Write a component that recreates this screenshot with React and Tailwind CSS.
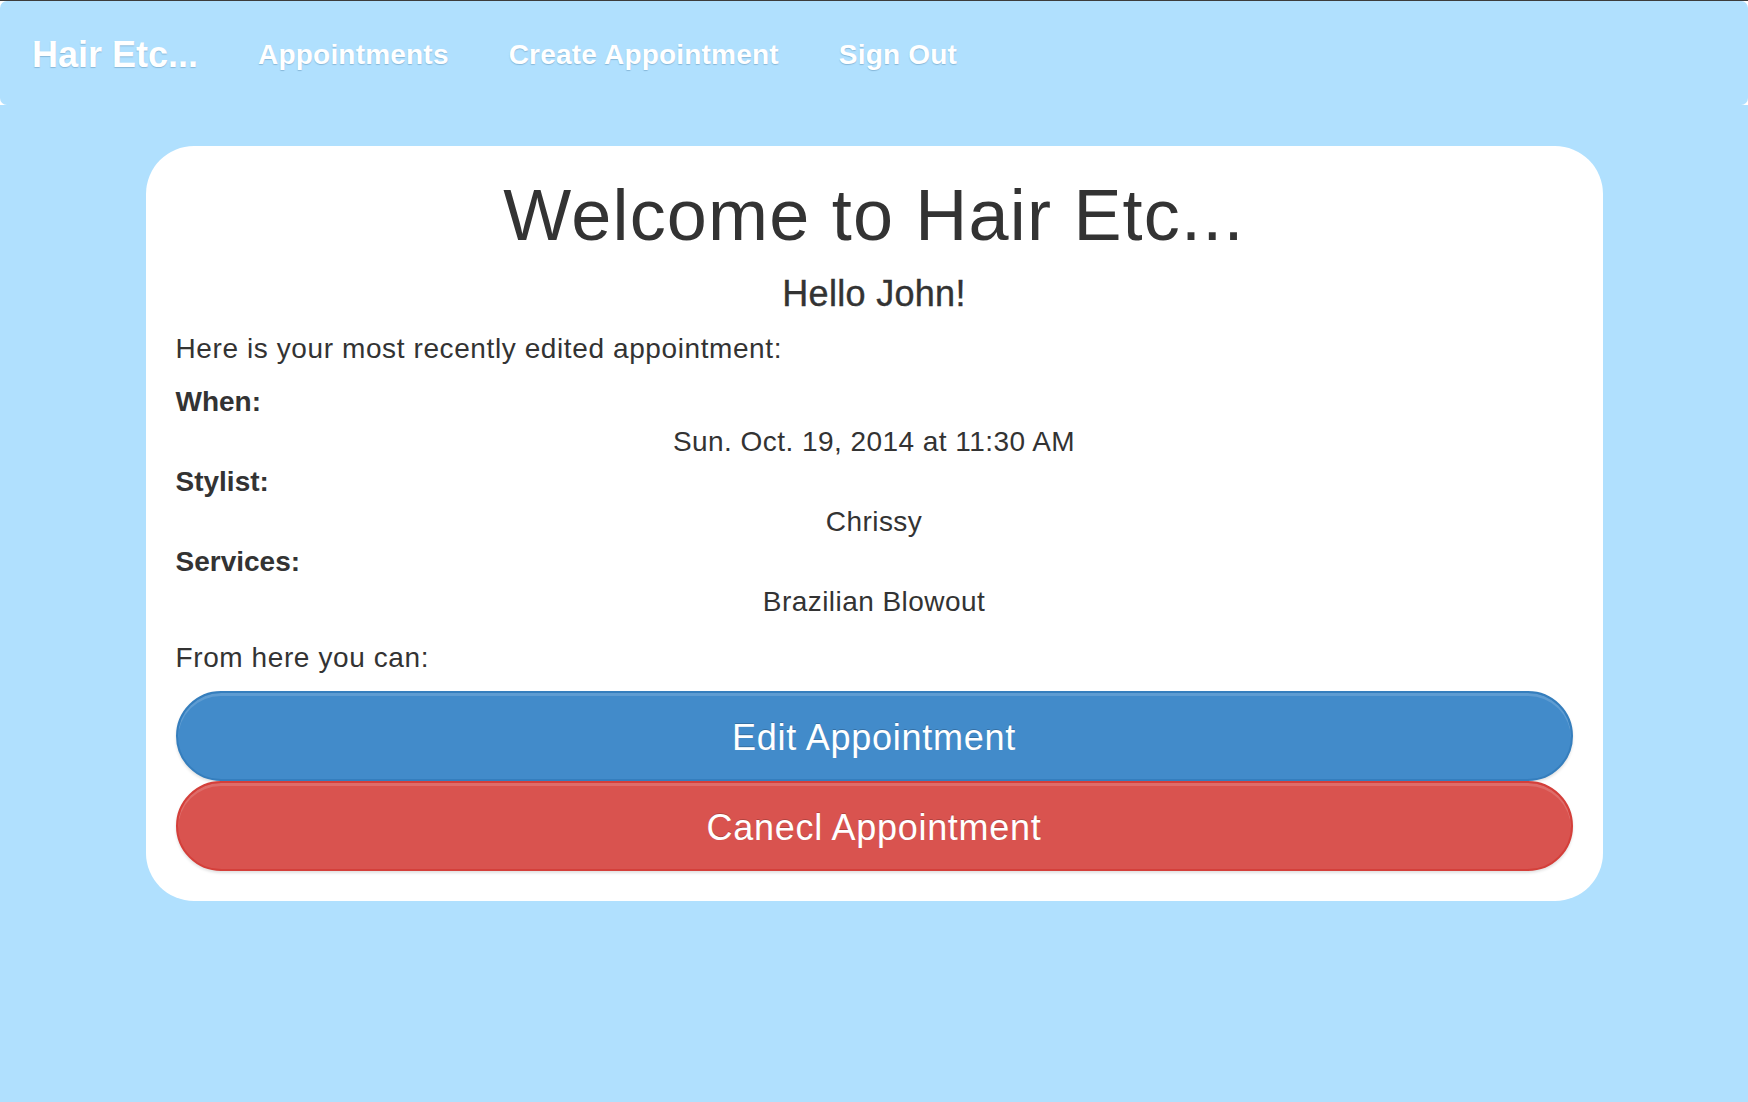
import React from 'react';

const navLinks = ['Appointments', 'Create Appointment', 'Sign Out'];

const details = [
    { label: 'When:', value: 'Sun. Oct. 19, 2014 at 11:30 AM' },
    { label: 'Stylist:', value: 'Chrissy' },
    { label: 'Services:', value: 'Brazilian Blowout' },
];

const App = () => {
    return (
        <div className="min-h-[1102px] bg-[#b0e0fe] font-['Liberation_Sans',Arial,sans-serif] text-[#333]">
            {/* navbar sits on a white strip, corners show through */}
            <div className="bg-white border-t border-[#3c3c3c]">
                <nav className="h-[104px] bg-[#b0e0fe] rounded-[7px] flex items-center pl-[32px] gap-[60px] text-white font-bold [text-shadow:0_1px_1px_rgba(60,110,150,0.35)]">
                    <a href="#" className="text-[36px] leading-none mt-[3px]">Hair Etc...</a>
                    {navLinks.map(link => (
                        <a key={link} href="#" className="text-[28px] leading-none tracking-[0.2px] mt-[3px]">
                            {link}
                        </a>
                    ))}
                </nav>
            </div>

            <div className="w-[1457px] mx-auto mt-[41px] bg-white rounded-[48px] p-[30px] text-[28px] leading-[40px] tracking-[0.6px]">
                <h1 className="text-[72px] leading-[79px] text-center font-normal tracking-[1.2px]">Welcome to Hair Etc...</h1>
                <h4 className="mt-[19px] text-[36px] leading-[40px] text-center font-medium tracking-[0.3px] [-webkit-text-stroke:0.4px_#333]">Hello John!</h4>
                <p className="mt-[15px]">Here is your most recently edited appointment:</p>

                <div className="mt-[13px]">
                    {details.map(d => (
                        <div key={d.label}>
                            <div className="font-bold tracking-normal">{d.label}</div>
                            <div className="text-center tracking-[0.45px]">{d.value}</div>
                        </div>
                    ))}
                </div>

                <p className="mt-[16px]">From here you can:</p>

                <div className="mt-[13px] flex flex-col">
                    <button className="h-[90px] w-full rounded-full bg-[#428bca] border-2 border-[#357ebd] text-white text-[36px] tracking-[0.75px] pt-[3px] shadow-[inset_0_3px_0_rgba(255,255,255,0.15),0_2px_3px_rgba(0,0,0,0.12)] [text-shadow:0_-1px_0_rgba(0,0,0,0.2)]">
                        Edit Appointment
                    </button>
                    <button className="h-[90px] w-full rounded-full bg-[#d9534f] border-2 border-[#d43f3a] text-white text-[36px] tracking-[0.7px] pt-[3px] shadow-[inset_0_3px_0_rgba(255,255,255,0.15),0_2px_3px_rgba(0,0,0,0.12)] [text-shadow:0_-1px_0_rgba(0,0,0,0.2)]">
                        Canecl Appointment
                    </button>
                </div>
            </div>
        </div>
    );
};

export default App;
